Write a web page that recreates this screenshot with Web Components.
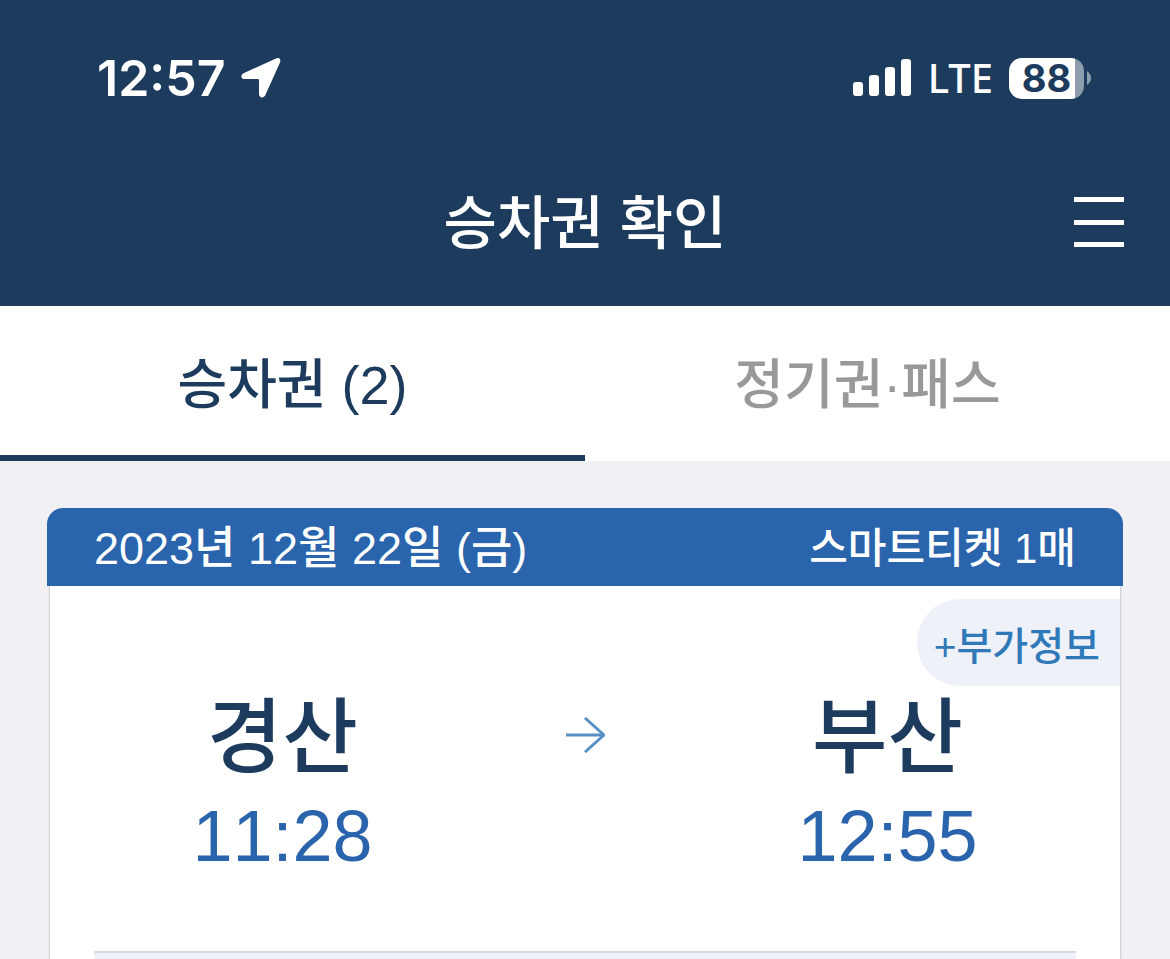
<!DOCTYPE html>
<html lang="ko">
<head>
<meta charset="UTF-8">
<meta name="viewport" content="width=device-width, initial-scale=1">
<title>승차권 확인</title>
<style>
  :root {
    --navy: #1c3b5d;
    --blue: #2a64ac;
    --link: #2f79b9;
    --pale: #eef1f7;
  }
  html, body { height: 100%; }
  body {
    margin: 0;
    display: flex;
    flex-direction: column;
    background: #f0f0f5;
    color: var(--navy);
    font-family: "Liberation Sans", "Noto Sans CJK KR", sans-serif;
    font-weight: 500;
    overflow: hidden;
  }
  main { flex: 1; display: flex; padding: 47px 47px 0; }
</style>
</head>
<body>
<status-bar time="12:57" network="LTE" battery="88"></status-bar>
<app-header>승차권 확인</app-header>
<tab-bar>
  <tab-item href="#tickets" active>승차권 (2)</tab-item>
  <tab-item href="#passes">정기권·패스</tab-item>
</tab-bar>
<main>
  <ticket-card>
    <span slot="date">2023년 12월 22일 (금)</span>
    <span slot="kind">스마트티켓 1매</span>
    <station-stop slot="from" time="11:28">경산</station-stop>
    <station-stop slot="to" time="12:55">부산</station-stop>
  </ticket-card>
</main>

<script>
class StatusBar extends HTMLElement {
  constructor() {
    super();
    this.attachShadow({ mode: 'open' });
  }

  connectedCallback() {
    const time = this.getAttribute('time');
    const network = this.getAttribute('network');
    const battery = this.getAttribute('battery');

    this.shadowRoot.innerHTML = `
      <style>
        :host {
          display: flex;
          align-items: center;
          justify-content: space-between;
          height: 156px;
          padding: 0 79px 0 97px;
          box-sizing: border-box;
          background: var(--navy);
          color: #fff;
          font-family: Inter, sans-serif;
        }
        svg { display: block; }
        .left, .right { display: flex; align-items: center; }
        .left { gap: 15px; font-size: 50px; font-weight: 600; line-height: 60px; }
        .right { gap: 16px; }
        .network { font: 500 40px/60px "Noto Sans", sans-serif; }
        .battery { display: flex; align-items: center; gap: 3px; }
        .level {
          width: 75px;
          height: 41px;
          border-radius: 13px;
          background: linear-gradient(to right, #fff 66px, #8d9dae 66px);
          color: var(--navy);
          font: 700 38px/41px Inter, sans-serif;
          text-align: center;
        }
      </style>
      <div class="left">
        <span>${time}</span>
        <svg width="40" height="42" viewBox="0 0 40 42" aria-hidden="true">
          <path fill="#fff" d="M35 1.500 3 16C-.8 17.800-.2 22.100 3.300 22.100H16.700Q18 22.100 18 23.400V37C18 41.200 22.800 41.700 24.400 38L39 5.400C40.400 2.200 38.100 0 35 1.500Z"/>
        </svg>
      </div>
      <div class="right">
        <svg width="59" height="38" viewBox="0 0 59 38" fill="#fff" aria-hidden="true">
          <rect x="0" y="23" width="10" height="14" rx="3"/>
          <rect x="16" y="16" width="10" height="21" rx="3"/>
          <rect x="32" y="8" width="10" height="29" rx="3"/>
          <rect x="48" y="0" width="10" height="37" rx="3"/>
        </svg>
        <span class="network">${network}</span>
        <div class="battery">
          <div class="level">${battery}</div>
          <svg width="4" height="14" viewBox="0 0 4 14" aria-hidden="true"><path fill="#8d9dae" d="M0 0Q4 3 4 7T0 14Z"/></svg>
        </div>
      </div>
    `;
  }
}

class AppHeader extends HTMLElement {
  constructor() {
    super();
    this.attachShadow({ mode: 'open' });
    this.shadowRoot.innerHTML = `
      <style>
        :host {
          display: grid;
          grid-template-columns: 1fr auto 1fr;
          align-items: center;
          height: 150px;
          padding: 0 46px 18px;
          box-sizing: border-box;
          background: var(--navy);
          color: #fff;
        }
        h1 { grid-column: 2; margin: 0; padding-top: 4px; font-size: 58px; font-weight: 500; line-height: 80px; }
        button { justify-self: end; padding: 0; border: 0; background: none; cursor: pointer; }
        svg { display: block; }
      </style>
      <h1><slot></slot></h1>
      <button type="button" aria-label="메뉴">
        <svg width="50" height="51" viewBox="0 0 50 51" fill="#fff">
          <rect width="50" height="5"/>
          <rect y="23" width="50" height="5"/>
          <rect y="45" width="50" height="5"/>
        </svg>
      </button>
    `;
  }
}

class TabBar extends HTMLElement {
  constructor() {
    super();
    this.attachShadow({ mode: 'open' });
    this.shadowRoot.innerHTML = `
      <style>
        :host { display: block; background: #fff; }
        nav { display: grid; grid-template-columns: 1fr 1fr; }
      </style>
      <nav><slot></slot></nav>
    `;
  }
}

class TabItem extends HTMLElement {
  constructor() {
    super();
    this.attachShadow({ mode: 'open' });
  }

  connectedCallback() {
    this.shadowRoot.innerHTML = `
      <style>
        :host { display: block; color: #999; }
        :host([active]) { color: var(--navy); }
        a {
          display: block;
          height: 155px;
          box-sizing: border-box;
          border-bottom: 6px solid transparent;
          color: inherit;
          font-size: 54px;
          line-height: 158px;
          text-align: center;
          text-decoration: none;
        }
        :host([active]) a { border-color: var(--navy); }
        :host(:last-child) a { padding-right: 20px; }
      </style>
      <a href="${this.getAttribute('href')}"><slot></slot></a>
    `;
  }
}

class StationStop extends HTMLElement {
  constructor() {
    super();
    this.attachShadow({ mode: 'open' });
  }

  connectedCallback() {
    const time = this.getAttribute('time');
    this.shadowRoot.innerHTML = `
      <style>
        :host { display: block; text-align: center; }
        .name { padding-top: 2px; font-size: 82px; line-height: 100px; }
        time {
          display: block;
          color: var(--blue);
          font-size: 72px;
          font-kerning: none;
          line-height: 96px;
        }
      </style>
      <div class="name"><slot></slot></div>
      <time datetime="${time}">${time}</time>
    `;
  }
}

class TicketCard extends HTMLElement {
  constructor() {
    super();
    this.attachShadow({ mode: 'open' });
    this.shadowRoot.innerHTML = `
      <style>
        :host { flex: 1; display: flex; flex-direction: column; }
        header {
          display: flex;
          align-items: center;
          justify-content: space-between;
          height: 78px;
          padding: 4px 47px 0;
          box-sizing: border-box;
          border-radius: 16px 16px 0 0;
          background: var(--blue);
          color: #fff;
          line-height: 74px;
        }
        .date { font-size: 45px; }
        .kind { font-size: 42px; }
        .body {
          flex: 1;
          display: flex;
          flex-direction: column;
          margin: 0 2px;
          padding-top: 13px;
          border: solid #d5d5da;
          border-width: 0 1px;
          box-shadow: 0 0 2px #d0d0d6;
          clip-path: inset(0 -3px);
          background: #fff;
        }
        button {
          align-self: flex-end;
          height: 87px;
          padding: 0 20px 0 17px;
          border: 0;
          border-radius: 44px 0 0 44px;
          background: var(--pale);
          color: var(--link);
          font: inherit;
          font-size: 39px;
          cursor: pointer;
        }
        .route {
          display: grid;
          grid-template-columns: 1fr 140px 1fr;
          align-items: start;
        }
        .arrow { display: block; margin: 31px auto 0; }
        .detail {
          flex: 1;
          margin: 67px 44px 0;
          border-top: 2px solid #d8d9de;
          background: var(--pale);
        }
      </style>
      <header>
        <div class="date"><slot name="date"></slot></div>
        <div class="kind"><slot name="kind"></slot></div>
      </header>
      <div class="body">
        <button type="button">+부가정보</button>
        <div class="route">
          <slot name="from"></slot>
          <svg class="arrow" width="40" height="36" viewBox="0 0 40 36" fill="none" stroke="#5690c4" stroke-width="3" aria-hidden="true">
            <path d="M1 18H39M20 1 39 18 20 35"/>
          </svg>
          <slot name="to"></slot>
        </div>
        <div class="detail"></div>
      </div>
    `;
  }
}

customElements.define('status-bar', StatusBar);
customElements.define('app-header', AppHeader);
customElements.define('tab-bar', TabBar);
customElements.define('tab-item', TabItem);
customElements.define('station-stop', StationStop);
customElements.define('ticket-card', TicketCard);
</script>
</body>
</html>
